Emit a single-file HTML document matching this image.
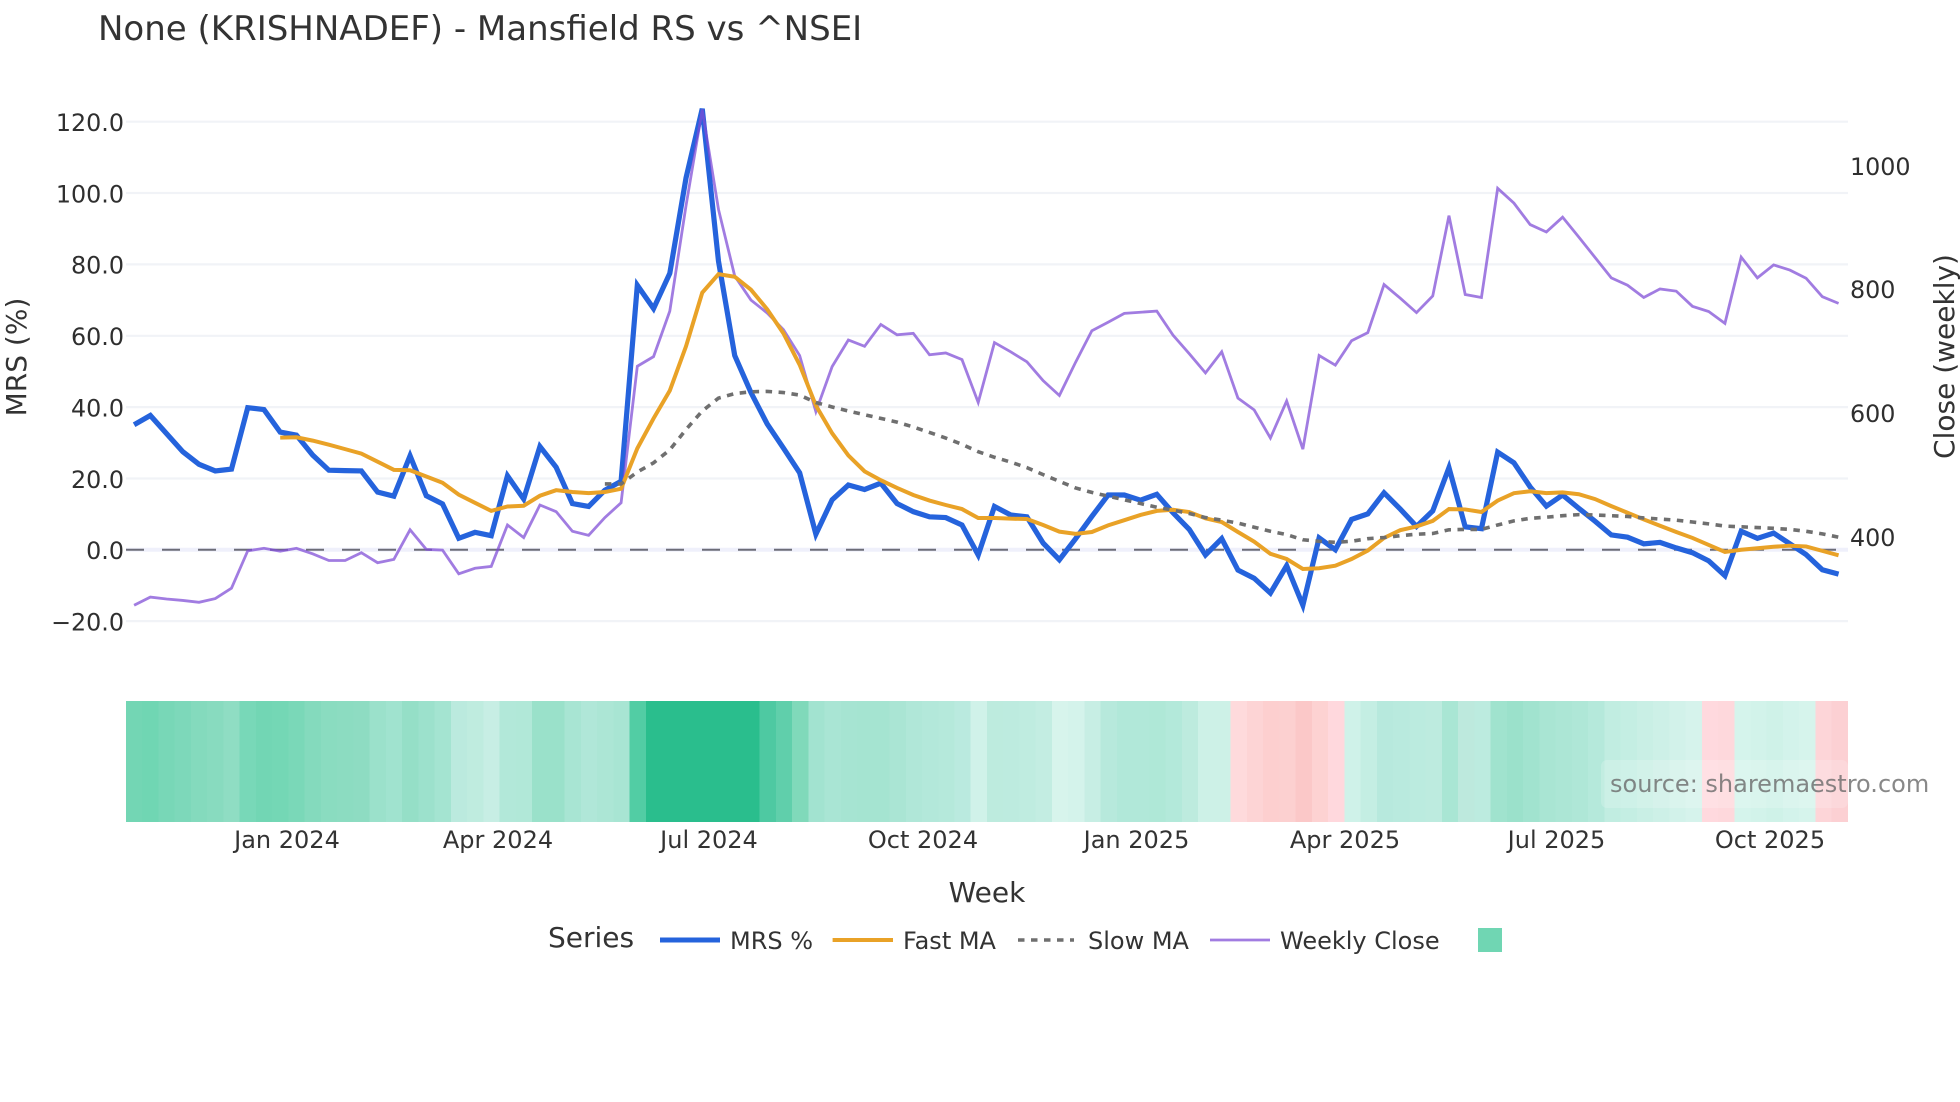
<!DOCTYPE html>
<html lang="en">
<head>
<meta charset="utf-8">
<title>None (KRISHNADEF) - Mansfield RS vs ^NSEI</title>
<style>
html,body{margin:0;padding:0;background:#fff;width:1960px;height:1102px;overflow:hidden}
svg{display:block}
text{font-family:"DejaVu Sans","Liberation Sans",sans-serif;fill:#333}
.t{font-size:23.8px;fill:#2f2f2f}
.a{font-size:28px;fill:#333}
.l{font-size:24px;fill:#333}
.s{fill:none;vector-effect:non-scaling-stroke}
</style>
</head>
<body>
<svg width="1960" height="1102" viewBox="0 0 1960 1102" xmlns="http://www.w3.org/2000/svg">
<rect width="1960" height="1102" fill="#fff"/>
<text x="98" y="40" style="font-size:34px" fill="#333">None (KRISHNADEF) - Mansfield RS vs ^NSEI</text>

<!-- grid -->
<g stroke="#f1f3f7" stroke-width="2.2">
<line x1="126" x2="1848" y1="121.7" y2="121.7"/>
<line x1="126" x2="1848" y1="193" y2="193"/>
<line x1="126" x2="1848" y1="264.4" y2="264.4"/>
<line x1="126" x2="1848" y1="335.8" y2="335.8"/>
<line x1="126" x2="1848" y1="407.1" y2="407.1"/>
<line x1="126" x2="1848" y1="478.5" y2="478.5"/>
<line x1="126" x2="1848" y1="621.1" y2="621.1"/>
</g>
<line x1="126" x2="1848" y1="549.8" y2="549.8" stroke="#eff0fb" stroke-width="4"/>
<line x1="126" x2="1848" y1="549.8" y2="549.8" stroke="#6c6c78" stroke-width="2" stroke-dasharray="18 18"/>

<!-- y ticks -->
<g class="t" text-anchor="end">
<text class="t" x="124" y="131">120.0</text>
<text class="t" x="124" y="202.4">100.0</text>
<text class="t" x="124" y="273.6">80.0</text>
<text class="t" x="124" y="345">60.0</text>
<text class="t" x="124" y="416.4">40.0</text>
<text class="t" x="124" y="487.8">20.0</text>
<text class="t" x="124" y="559">0.0</text>
<text class="t" x="124" y="630.4">−20.0</text>
</g>
<text class="t" x="1850" y="175">1000</text>
<text class="t" x="1850" y="298">800</text>
<text class="t" x="1850" y="422">600</text>
<text class="t" x="1850" y="546">400</text>

<text class="a" transform="translate(26,357) rotate(-90)" text-anchor="middle">MRS (%)</text>
<text class="a" transform="translate(1954,356.5) rotate(-90)" text-anchor="middle">Close (weekly)</text>

<!-- series -->
<g transform="matrix(16.233 0 0 0.36996 134.1 0)">
<polyline class="s" stroke="#2563dc" stroke-width="5.2" points="0,1148 1,1123 2,1172 3,1221 4,1255 5,1273 6,1268 7,1102 8,1107 9,1168 10,1176 11,1230 12,1271 13,1272 14,1273 15,1330 16,1341 17,1232 18,1340 19,1362 20,1455 21,1439 22,1448 23,1286 24,1349 25,1207 26,1263 27,1361 28,1369 29,1325 30,1301 31,771 32,834 33,739 34,481 35,294 36,706 37,961 38,1061 39,1146 40,1211 41,1278 42,1444 43,1351 44,1311 45,1323 46,1306 47,1361 48,1383 49,1397 50,1399 51,1419 52,1500 53,1369 54,1392 55,1397 56,1468 57,1513 58,1456 59,1396 60,1338 61,1338 62,1352 63,1336 64,1386 65,1431 66,1500 67,1456 68,1541 69,1563 70,1603 71,1529 72,1636 73,1454 74,1486 75,1404 76,1389 77,1332 78,1376 79,1423 80,1381 81,1264 82,1424 83,1429 84,1222 85,1251 86,1316 87,1368 88,1338 89,1374 90,1409 91,1446 92,1452 93,1470 94,1466 95,1481 96,1494 97,1516 98,1556 99,1436 100,1455 101,1441 102,1470 103,1499 104,1540 105,1552"/>
<polyline class="s" stroke="#7e4bd6" stroke-opacity=".73" stroke-width="2.8" points="0,1636 1,1614 2,1619 3,1623 4,1628 5,1618 6,1590 7,1489 8,1482 9,1490 10,1482 11,1497 12,1515 13,1515 14,1494 15,1521 16,1512 17,1432 18,1485 19,1487 20,1551 21,1536 22,1531 23,1419 24,1453 25,1365 26,1383 27,1436 28,1447 29,1399 30,1359 31,990 32,964 33,841 34,556 35,296 36,566 37,746 38,811 39,846 40,891 41,961 42,1113 43,991 44,919 45,936 46,877 47,905 48,901 49,959 50,954 51,972 52,1088 53,926 54,951 55,978 56,1029 57,1069 58,979 59,894 60,871 61,847 62,844 63,841 64,906 65,956 66,1008 67,951 68,1076 69,1108 70,1184 71,1084 72,1214 73,961 74,987 75,921 76,899 77,769 78,806 79,845 80,800 81,583 82,796 83,804 84,509 85,549 86,607 87,627 88,587 89,641 90,696 91,751 92,771 93,804 94,781 95,787 96,828 97,842 98,874 99,695 100,751 101,716 102,730 103,752 104,802 105,820"/>
<polyline class="s" stroke="#e9a227" stroke-width="4" points="9,1183 10,1182 11,1191 12,1202 13,1214 14,1226 15,1248 16,1270 17,1271 18,1288 19,1305 20,1337 21,1359 22,1381 23,1369 24,1367 25,1340 26,1325 27,1330 28,1333 29,1330 30,1321 31,1212 32,1131 33,1056 34,936 35,791 36,741 37,748 38,783 39,836 40,901 41,986 42,1096 43,1171 44,1231 45,1274 46,1298 47,1319 48,1338 49,1353 50,1365 51,1376 52,1400 53,1400 54,1402 55,1403 56,1419 57,1437 58,1443 59,1438 60,1420 61,1406 62,1392 63,1381 64,1378 65,1384 66,1401 67,1411 68,1438 69,1464 70,1497 71,1511 72,1538 73,1536 74,1529 75,1511 76,1488 77,1454 78,1433 79,1423 80,1408 81,1376 82,1377 83,1384 84,1353 85,1333 86,1328 87,1333 88,1331 89,1336 90,1349 91,1368 92,1386 93,1404 94,1421 95,1438 96,1454 97,1473 98,1492 99,1486 100,1482 101,1478 102,1475 103,1477 104,1489 105,1501"/>
<polyline class="s" stroke="#6f6f6f" stroke-width="3.6" stroke-dasharray="6.5 6.5" points="29,1308 30,1308 31,1276 32,1251 33,1216 34,1161 35,1111 36,1076 37,1064 38,1059 39,1058 40,1061 41,1068 42,1088 43,1100 44,1111 45,1121 46,1131 47,1141 48,1154 49,1169 50,1184 51,1201 52,1221 53,1236 54,1249 55,1264 56,1283 57,1301 58,1319 59,1331 60,1341 61,1351 62,1361 63,1371 64,1379 65,1388 66,1399 67,1406 68,1414 69,1425 70,1436 71,1445 72,1459 73,1463 74,1466 75,1463 76,1456 77,1453 78,1448 79,1444 80,1442 81,1432 82,1431 83,1431 84,1419 85,1408 86,1401 87,1398 88,1394 89,1391 90,1392 91,1394 92,1396 93,1400 94,1403 95,1406 96,1411 97,1416 98,1422 99,1424 100,1426 101,1428 102,1431 103,1436 104,1443 105,1452"/>
</g>

<!-- heat strip -->
<g transform="translate(126,701) scale(16.245,121)" shape-rendering="crispEdges">
<rect x="0" width="1.02" height="1" fill="#73d6b4"/><rect x="1" width="1.02" height="1" fill="#70d6b3"/><rect x="2" width="1.02" height="1" fill="#78d7b7"/><rect x="3" width="1.02" height="1" fill="#7dd8ba"/><rect x="4" width="1.02" height="1" fill="#84dabd"/><rect x="5" width="1.02" height="1" fill="#88dbbf"/><rect x="6" width="1.02" height="1" fill="#8fddc3"/><rect x="7" width="1.02" height="1" fill="#78d8b8"/><rect x="8" width="1.02" height="1" fill="#72d6b4"/><rect x="9" width="1.02" height="1" fill="#74d7b5"/>
<rect x="10" width="1.02" height="1" fill="#7ad8b8"/><rect x="11" width="1.02" height="1" fill="#84dabd"/><rect x="12" width="1.02" height="1" fill="#8adcc0"/><rect x="13" width="1.02" height="1" fill="#8cdcc1"/><rect x="14" width="1.02" height="1" fill="#8edcc2"/><rect x="15" width="1.02" height="1" fill="#9be1cb"/><rect x="16" width="1.02" height="1" fill="#a0e3cf"/><rect x="17" width="1.02" height="1" fill="#95dfc7"/><rect x="18" width="1.02" height="1" fill="#9ce1cc"/><rect x="19" width="1.02" height="1" fill="#a4e4d1"/>
<rect x="20" width="1.02" height="1" fill="#bbeade"/><rect x="21" width="1.02" height="1" fill="#bfecdf"/><rect x="22" width="1.02" height="1" fill="#c7eee4"/><rect x="23" width="1.02" height="1" fill="#b2e8d9"/><rect x="24" width="1.02" height="1" fill="#b1e8d8"/><rect x="25" width="1.02" height="1" fill="#9ae1ca"/><rect x="26" width="1.02" height="1" fill="#9ae1ca"/><rect x="27" width="1.02" height="1" fill="#a8e5d3"/><rect x="28" width="1.02" height="1" fill="#b0e7d8"/><rect x="29" width="1.02" height="1" fill="#ace6d5"/>
<rect x="30" width="1.02" height="1" fill="#a8e5d3"/><rect x="31" width="1.02" height="1" fill="#52cda4"/><rect x="32" width="7.02" height="1" fill="#2abe8d"/><rect x="39" width="1.02" height="1" fill="#4ec9a2"/>
<rect x="40" width="1.02" height="1" fill="#60cfab"/><rect x="41" width="1.02" height="1" fill="#80d9ba"/><rect x="42" width="1.02" height="1" fill="#a2e3d0"/><rect x="43" width="1.02" height="1" fill="#a9e5d4"/><rect x="44" width="1.02" height="1" fill="#a6e4d2"/><rect x="45" width="1.02" height="1" fill="#a5e4d1"/><rect x="46" width="1.02" height="1" fill="#a5e4d1"/><rect x="47" width="1.02" height="1" fill="#aae5d4"/><rect x="48" width="1.02" height="1" fill="#b0e7d8"/><rect x="49" width="1.02" height="1" fill="#b3e8da"/>
<rect x="50" width="1.02" height="1" fill="#b5e9db"/><rect x="51" width="1.02" height="1" fill="#baeadf"/><rect x="52" width="1.02" height="1" fill="#d0f2e9"/><rect x="53" width="1.02" height="1" fill="#bdebde"/><rect x="54" width="1.02" height="1" fill="#bdebdf"/><rect x="55" width="1.02" height="1" fill="#bfece0"/><rect x="56" width="1.02" height="1" fill="#c3ede2"/><rect x="57" width="1.02" height="1" fill="#d7f4ec"/><rect x="58" width="1.02" height="1" fill="#d4f3eb"/><rect x="59" width="1.02" height="1" fill="#c7eee4"/>
<rect x="60" width="1.02" height="1" fill="#b7e9dc"/><rect x="61" width="1.02" height="1" fill="#b1e8d9"/><rect x="62" width="1.02" height="1" fill="#b1e8d9"/><rect x="63" width="1.02" height="1" fill="#afe8d7"/><rect x="64" width="1.02" height="1" fill="#b3e9da"/><rect x="65" width="1.02" height="1" fill="#bdebde"/><rect x="66" width="1.02" height="1" fill="#cdf1e7"/><rect x="67" width="1.02" height="1" fill="#cdf1e7"/><rect x="68" width="1.02" height="1" fill="#fedadc"/><rect x="69" width="1.02" height="1" fill="#fdd4d5"/>
<rect x="70" width="1.02" height="1" fill="#fdcfcf"/><rect x="71" width="1.02" height="1" fill="#fcd0d0"/><rect x="72" width="1.02" height="1" fill="#fbc8c8"/><rect x="73" width="1.02" height="1" fill="#fdd2d2"/><rect x="74" width="1.02" height="1" fill="#ffd8dd"/><rect x="75" width="1.02" height="1" fill="#cff2e9"/><rect x="76" width="1.02" height="1" fill="#c4eee3"/><rect x="77" width="1.02" height="1" fill="#b7e9dd"/><rect x="78" width="1.02" height="1" fill="#b9eade"/><rect x="79" width="1.02" height="1" fill="#bbebdf"/>
<rect x="80" width="1.02" height="1" fill="#bdebdf"/><rect x="81" width="1.02" height="1" fill="#a9e6d4"/><rect x="82" width="1.02" height="1" fill="#bde9dd"/><rect x="83" width="1.02" height="1" fill="#bcebdf"/><rect x="84" width="1.02" height="1" fill="#a0e3ce"/><rect x="85" width="1.02" height="1" fill="#9be1cb"/><rect x="86" width="1.02" height="1" fill="#a1e3cf"/><rect x="87" width="1.02" height="1" fill="#a9e5d3"/><rect x="88" width="1.02" height="1" fill="#ace6d5"/><rect x="89" width="1.02" height="1" fill="#afe7d7"/>
<rect x="90" width="1.02" height="1" fill="#b5e9db"/><rect x="91" width="1.02" height="1" fill="#c1ede1"/><rect x="92" width="1.02" height="1" fill="#c4eee3"/><rect x="93" width="1.02" height="1" fill="#c9efe5"/><rect x="94" width="1.02" height="1" fill="#cdf0e7"/><rect x="95" width="1.02" height="1" fill="#d2f2ea"/><rect x="96" width="1.02" height="1" fill="#d6f3ec"/><rect x="97" width="1.02" height="1" fill="#ffd9de"/><rect x="98" width="1.02" height="1" fill="#fed8dc"/><rect x="99" width="1.02" height="1" fill="#d5f4ec"/>
<rect x="100" width="1.02" height="1" fill="#d2f3ea"/><rect x="101" width="1.02" height="1" fill="#cff2e8"/><rect x="102" width="1.02" height="1" fill="#d3f3eb"/><rect x="103" width="1.02" height="1" fill="#d6f4ec"/><rect x="104" width="1.02" height="1" fill="#fdd5d8"/><rect x="105" width="1" height="1" fill="#fcd0d3"/>
</g>

<!-- watermark -->
<rect x="1601" y="760" width="247" height="48" rx="6" fill="#fff" fill-opacity=".18"/>
<text x="1610" y="792" style="font-size:24px;fill:#6a6a6a;fill-opacity:.8">source: sharemaestro.com</text>

<!-- x ticks -->
<g text-anchor="middle">
<text class="l" x="287" y="848">Jan 2024</text>
<text class="l" x="498" y="848">Apr 2024</text>
<text class="l" x="709" y="848">Jul 2024</text>
<text class="l" x="923" y="848">Oct 2024</text>
<text class="l" x="1136.5" y="848">Jan 2025</text>
<text class="l" x="1345" y="848">Apr 2025</text>
<text class="l" x="1556.5" y="848">Jul 2025</text>
<text class="l" x="1770" y="848">Oct 2025</text>
<text class="a" x="987" y="902">Week</text>
</g>

<!-- legend -->
<text class="a" x="548" y="947">Series</text>
<line x1="660" x2="720" y1="940" y2="940" stroke="#2563dc" stroke-width="5"/>
<text class="l" x="730" y="949">MRS %</text>
<line x1="832.6" x2="893" y1="940" y2="940" stroke="#e9a227" stroke-width="4"/>
<text class="l" x="903" y="949">Fast MA</text>
<line x1="1018" x2="1074" y1="940" y2="940" stroke="#6f6f6f" stroke-width="3.6" stroke-dasharray="6.5 6.5"/>
<text class="l" x="1088" y="949">Slow MA</text>
<line x1="1210" x2="1270" y1="940" y2="940" stroke="#a17ce1" stroke-width="2.8"/>
<text class="l" x="1280" y="949">Weekly Close</text>
<rect x="1478" y="928" width="24" height="24" fill="#70d6b3"/>
</svg>
</body>
</html>
